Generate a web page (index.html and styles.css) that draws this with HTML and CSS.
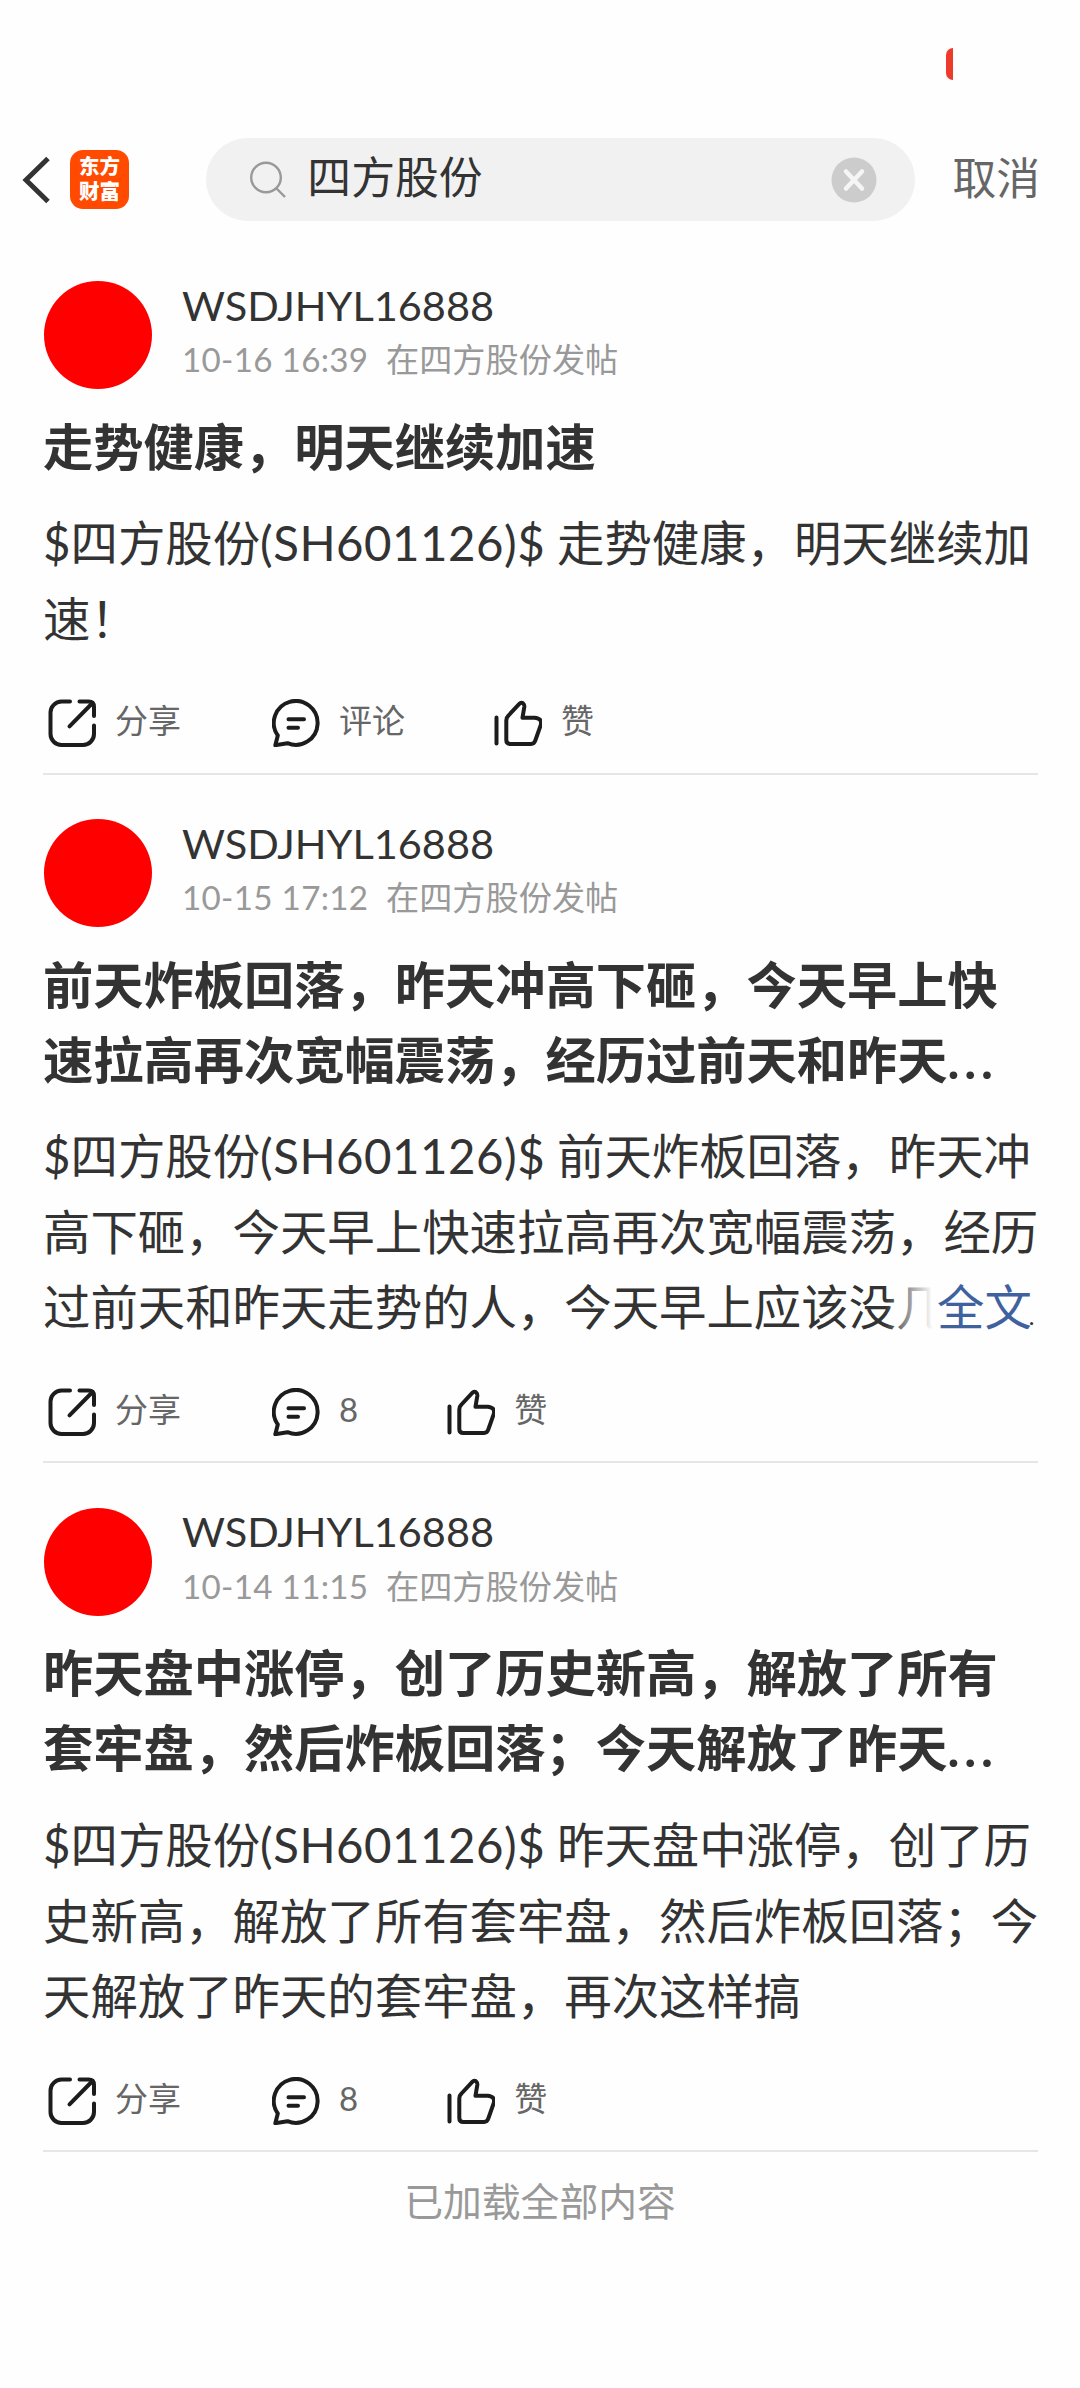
FILE: index.html
```html
<!DOCTYPE html>
<html lang="zh-CN">
<head>
<meta charset="utf-8">
<title>四方股份</title>
<link rel="stylesheet" href="styles.css">
</head>
<body>
<svg class="defs" width="0" height="0">
  <symbol id="share" viewBox="0 0 48 48"><path d="M22 2.6H13.500A11 11 0 0 0 2.500 13.600V35A11 11 0 0 0 13.500 46H35A11 11 0 0 0 46 35V26.500M31.500 2.600H40.500Q46 2.600 46 8V17M21.500 27.300L44.500 4"/></symbol>
  <symbol id="comment" viewBox="0 0 48 48"><path d="M5.800 36.500A21.900 21.900 0 1 1 15.500 44.200L3.300 46.200ZM16.500 20.200H32M16.500 28.700H26"/></symbol>
  <symbol id="like" viewBox="0 0 48 48"><path d="M2.500 18.500V44.500M12.300 21.500Q12.300 18.500 14.500 16.500L25.300 4.800Q27 3 29 4.300Q30.600 5.400 30.300 8L28.500 18.700H40.500Q48.500 19.300 46.800 26L41.300 41.500Q40.200 45 37 45H16.500Q12.300 45 12.300 41Z"/></symbol>
</svg>
<div class="status"><i class="battery"></i></div>
<header class="topbar">
  <svg class="back" width="30" height="48" viewBox="0 0 30 48"><path d="M26 2.500L4 24L26 45.500"/></svg>
  <div class="logo">东方<br>财富</div>
  <div class="search">
    <svg class="lens" width="38" height="38" viewBox="0 0 38 38"><circle cx="17" cy="16.500" r="14.800"/><path d="M27 27L36 36"/></svg>
    <span class="query">四方股份</span>
    <svg class="clear" width="46" height="46" viewBox="0 0 46 46"><circle cx="23" cy="23" r="22.500"/><path d="M15 14.500L31 31.500M31 14.500L15 31.500"/></svg>
  </div>
  <span class="cancel">取消</span>
</header>
<main>
  <article class="post">
    <div class="author"><i class="avatar"></i><div><div class="name">WSDJHYL16888</div><div class="meta"><span class="time">10-16 16:39</span><span>在四方股份发帖</span></div></div></div>
    <h2 class="title">走势健康，明天继续加速</h2>
    <p class="text"><span class="stock">$四方股份<b>(SH601126)$</b></span>走势健康，明天继续加<br>速！</p>
    <div class="actions">
      <span class="action"><svg><use href="#share"/></svg>分享</span>
      <span class="action"><svg><use href="#comment"/></svg>评论</span>
      <span class="action"><svg><use href="#like"/></svg>赞</span>
    </div>
  </article>
  <article class="post">
    <div class="author"><i class="avatar"></i><div><div class="name">WSDJHYL16888</div><div class="meta"><span class="time">10-15 17:12</span><span>在四方股份发帖</span></div></div></div>
    <h2 class="title">前天炸板回落，昨天冲高下砸，今天早上快<br>速拉高再次宽幅震荡，经历过前天和昨天<span class="dots">...</span></h2>
    <p class="text"><span class="stock">$四方股份<b>(SH601126)$</b></span>前天炸板回落，昨天冲<br>高下砸，今天早上快速拉高再次宽幅震荡，经历<br>过前天和昨天走势的人，今天早上应该没几<span class="more">全文<span class="rest">.</span></span></p>
    <div class="actions">
      <span class="action"><svg><use href="#share"/></svg>分享</span>
      <span class="action"><svg><use href="#comment"/></svg>8</span>
      <span class="action"><svg><use href="#like"/></svg>赞</span>
    </div>
  </article>
  <article class="post">
    <div class="author"><i class="avatar"></i><div><div class="name">WSDJHYL16888</div><div class="meta"><span class="time">10-14 11:15</span><span>在四方股份发帖</span></div></div></div>
    <h2 class="title">昨天盘中涨停，创了历史新高，解放了所有<br>套牢盘，然后炸板回落；今天解放了昨天<span class="dots">...</span></h2>
    <p class="text"><span class="stock">$四方股份<b>(SH601126)$</b></span>昨天盘中涨停，创了历<br>史新高，解放了所有套牢盘，然后炸板回落；今<br>天解放了昨天的套牢盘，再次这样搞</p>
    <div class="actions">
      <span class="action"><svg><use href="#share"/></svg>分享</span>
      <span class="action"><svg><use href="#comment"/></svg>8</span>
      <span class="action"><svg><use href="#like"/></svg>赞</span>
    </div>
  </article>
</main>
<footer class="end">已加载全部内容</footer>
</body>
</html>
```
FILE: styles.css
```css
* { box-sizing: border-box; }
body { margin: 0; min-height: 2388px; background: #fefefe; color: #333; font-family: Lato, "Noto Sans CJK SC", sans-serif; white-space: nowrap; }
.defs { display: block; }
.status { height: 138px; padding: 48px 127px 0 0; display: flex; justify-content: flex-end; }
.battery { width: 7px; height: 32px; background: #ee3a2a; border-radius: 7px 0 0 7px; }
.topbar { height: 83px; padding: 0 40px 0 21px; display: flex; align-items: center; }
svg { fill: none; flex: none; }
.back { stroke: #333; stroke-width: 5; margin: 0 18px 0 1px; }
.logo { width: 59px; height: 59px; border-radius: 13px; background: #ff4a00; color: #fff; font-weight: 900; font-size: 20.5px; line-height: 25px; padding-top: 4px; text-align: center; margin-right: 77px; }
.search { width: 711px; height: 83px; border-radius: 42px; background: #f1f1f1; display: flex; align-items: center; padding: 0 38px 0 43px; }
.lens { stroke: #999; stroke-width: 2.4; margin-right: 20.5px; }
.query { font-size: 43.8px; line-height: 60px; flex: 1; padding-bottom: 5px; }
.clear { stroke: #f5f5f5; stroke-width: 4.5; stroke-linecap: round; }
.clear circle { fill: #ccc; stroke: none; }
.cancel { color: #666; font-size: 43.8px; line-height: 60px; margin-left: 37px; padding-bottom: 3px; }
main { padding: 14px 42px 0 43px; }
.post { padding: 44.5px 0 22.5px; border-bottom: 2px solid #e6e6e6; }
.post:first-child { padding-top: 46px; }
.author { display: flex; height: 108px; gap: 30px; }
.avatar { width: 108px; height: 108px; margin-left: 1px; border-radius: 50%; background: #f00; }
.name { font-size: 41.5px; line-height: 50px; margin-top: -1.5px; }
.meta { color: #999; font-size: 33.2px; line-height: 50px; margin-top: 4.5px; display: flex; }
.time { width: 204px; letter-spacing: .3px; }
.title { margin: 19.5px 0 0; font-size: 50.25px; line-height: 75px; font-weight: 700; }
.dots { letter-spacing: 4.8px; }
.text { margin: 21.7px 0 0; font-size: 47.4px; line-height: 75.5px; position: relative; }
.stock { display: inline-block; width: 514px; }
.stock b { font-weight: 400; letter-spacing: .5px; }
.more { position: absolute; right: 0; bottom: 0; width: 153px; padding-left: 52px; color: #3f629f; background: linear-gradient(to right, rgba(254,254,254,0), #fefefe 48px); }
.rest { color: #333; font-size: 24px; line-height: 1; margin-left: -3px; }
.actions { display: flex; gap: 91px; height: 60px; margin: 34px 0 0 5px; }
.action { display: flex; gap: 19px; align-items: center; font-size: 33px; line-height: 60px; color: #666; }
.action:last-child { margin-left: -2px; }
.action svg { width: 48px; height: 48px; margin-top: 6px; stroke: #1c1c1c; stroke-width: 4; stroke-linecap: round; stroke-linejoin: round; }
.end { margin-top: 19px; text-align: center; font-size: 38.8px; line-height: 60px; color: #999; }
```
